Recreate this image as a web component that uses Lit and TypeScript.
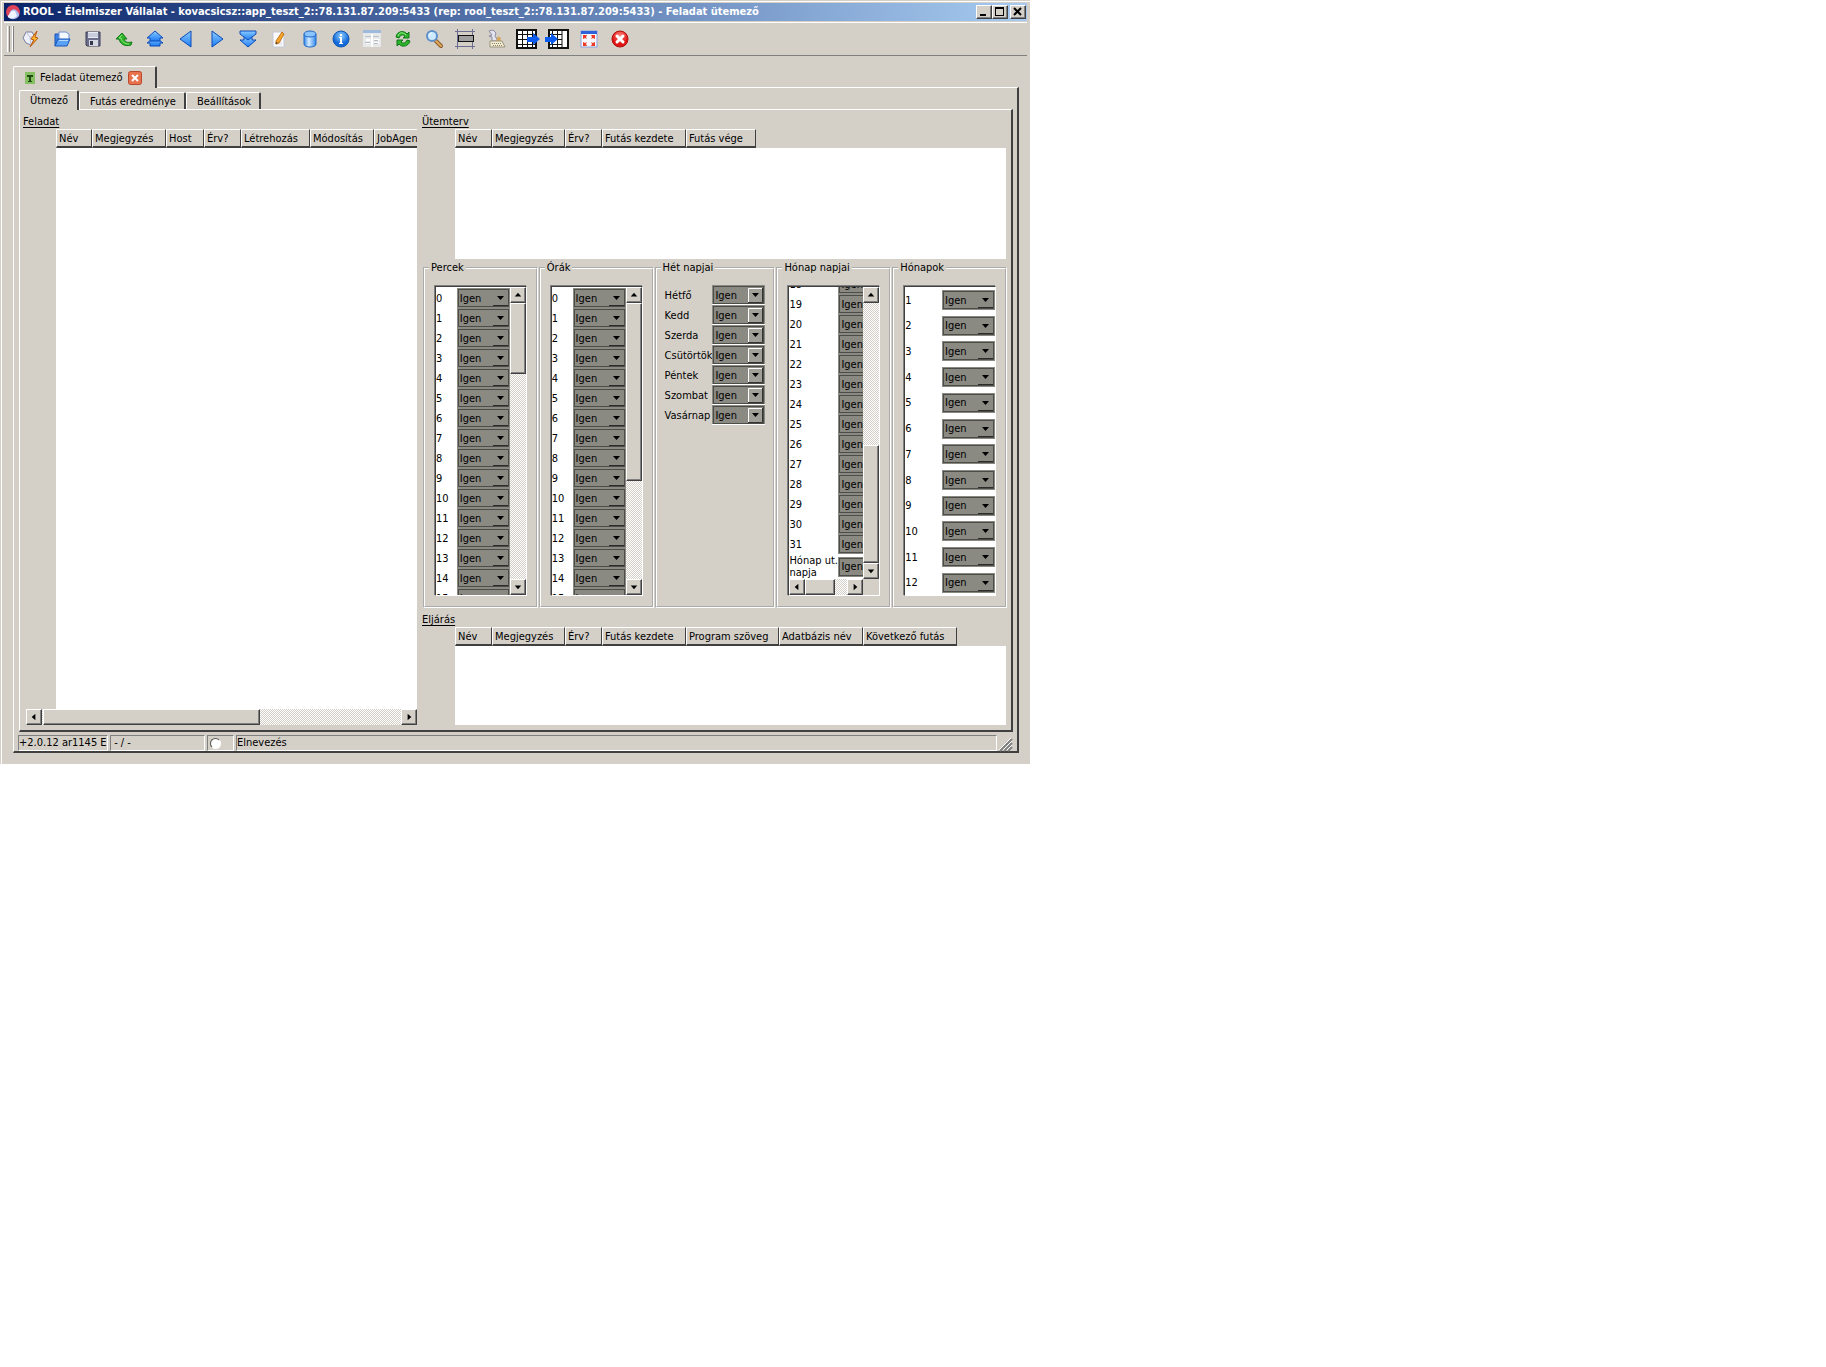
import { LitElement, html, css, svg } from "lit";
import { customElement, state } from "lit/decorators.js";

type Column = { title: string; width: number };

const col = (title: string, width: number): Column => ({ title, width });

const TASK_COLUMNS = [
  col("Név", 36), col("Megjegyzés", 74), col("Host", 38), col("Érv?", 37),
  col("Létrehozás", 69), col("Módosítás", 64), col("JobAgent", 60),
];
const PLAN_COLUMNS = [
  col("Név", 37), col("Megjegyzés", 73), col("Érv?", 37), col("Futás kezdete", 84), col("Futás vége", 70),
];
const PROC_COLUMNS = [
  col("Név", 37), col("Megjegyzés", 73), col("Érv?", 37), col("Futás kezdete", 84),
  col("Program szöveg", 93), col("Adatbázis név", 84), col("Következő futás", 94),
];
const DAYS = ["Hétfő", "Kedd", "Szerda", "Csütörtök", "Péntek", "Szombat", "Vasárnap"];
const range = (from: number, to: number) => Array.from({ length: to - from + 1 }, (_, i) => String(from + i));

const ICONS: { name: string; art: unknown }[] = [
  { name: "Új kapcsolat", art: svg`
    <path d="M5 3 L11 3 L14 8 L10 16 L5 14 L2 9 Z" fill="#eceff8" stroke="#7b7f9c"/>
    <path d="M5 3 L9 8 L10 16 M9 8 L14 8" fill="none" stroke="#b9bdd4"/>
    <path d="M16 2 L10 10 L13 11 L9 18 L17 9 L14 8 Z" fill="#ffb52e" stroke="#c05a10"/>` },
  { name: "Megnyitás", art: svg`
    <path d="M3 17 V5 H8 L10 7 H15 V9" fill="#3b80e6" stroke="#1c55b8"/>
    <path d="M7 3 H14 L17 5 V12 H7 Z" fill="#f4f8ff" stroke="#6c90d4"/>
    <path d="M3 17 L6 10 H18 L15 17 Z" fill="#5aa2f8" stroke="#1c55b8"/>
    <path d="M7 11.500 H16" stroke="#b8dcff"/>` },
  { name: "Mentés", art: svg`
    <path d="M3 3 H17 V17 H4 L3 16 Z" fill="#6c6f8c" stroke="#3c3f58"/>
    <rect x="5" y="3" width="10" height="6" fill="#e8ebf4"/><path d="M5 5 H15 M5 7 H15" stroke="#a7acc4"/>
    <rect x="6" y="11" width="9" height="6" fill="#d6d8e2"/><rect x="7" y="12" width="3" height="4" fill="#34374e"/>` },
  { name: "Visszavonás", art: svg`
    <path d="M8 4 L2 10 H5 C6 15 11 18 17 16 L18 13 C13 14 11 13 10 10 H13 Z" fill="#2fb52b" stroke="#127a16"/>
    <path d="M8 6 L5 9 H7 C8 13 11 15 15 15" fill="none" stroke="#8be77c"/>` },
  { name: "Első", art: svg`
    <path d="M10 8 L18 14 H15 V17 H5 V14 H2 Z" fill="url(#blue)" stroke="#0b4bb8"/>
    <path d="M10 2 L18 9 H15 V12 H5 V9 H2 Z" fill="url(#blue)" stroke="#0b4bb8"/>` },
  { name: "Előző", art: svg`<path d="M15 2 V18 L4 10 Z" fill="url(#blue)" stroke="#0b4bb8" stroke-linejoin="round"/>` },
  { name: "Következő", art: svg`<path d="M5 2 V18 L16 10 Z" fill="url(#blue)" stroke="#0b4bb8" stroke-linejoin="round"/>` },
  { name: "Utolsó", art: svg`
    <path d="M10 18 L18 11 H14 V8 H6 V11 H2 Z" fill="url(#blue)" stroke="#0b4bb8"/>
    <path d="M10 11 L18 5 V2 H2 V5 Z" fill="url(#blue)" stroke="#0b4bb8"/>` },
  { name: "Szerkesztés", art: svg`
    <rect x="4" y="3" width="11" height="15" fill="#fbfbfd" stroke="#c3c6d2"/>
    <path d="M6 13 H13 M6 15 H13" stroke="#d5d8e4"/>
    <path d="M13 3 L15 5 L10 14 L7 15 L7 12 Z" fill="#f5a52a" stroke="#c2731a"/><path d="M7 15 L8 13" stroke="#333"/>` },
  { name: "Adatbázis", art: svg`
    <path d="M4 5 V15 C4 19 16 19 16 15 V5 Z" fill="url(#tank)" stroke="#1f69c8"/>
    <ellipse cx="10" cy="5" rx="6" ry="3" fill="#8cc4fb" stroke="#1f69c8"/>` },
  { name: "Információ", art: svg`
    <circle cx="10" cy="10" r="8" fill="url(#ball)" stroke="#0f58b4"/>
    <rect x="9" y="5" width="2" height="2" fill="#fff"/><path d="M8 8 H11 V14 H12 V15 H8 V14 H9 V9 H8 Z" fill="#fff"/>` },
  { name: "Űrlap", art: svg`
    <rect x="1" y="2" width="18" height="16" fill="#e6e8ea"/><rect x="1" y="1" width="18" height="3" fill="#9db9dc"/>
    <path d="M3 7.500 H9 M11 7.500 H17" stroke="#b9c0c8"/><path d="M10 5 V18 M4 11 H8 M12 11 H17 M4 14 H8 M12 14 H17" stroke="#fff" stroke-width="2"/>
    <path d="M12 11.500 H16 M12 14.500 H16 M3 13.500 H8" stroke="#b4bac0"/>` },
  { name: "Frissítés", art: svg`
    <path d="M3 8 C4 2 11 1 14 5 L16 3 V9 H10 L12 7 C10 5 7 6 6 9 Z" fill="#2db52c" stroke="#0f7416"/>
    <path d="M17 12 C16 17 9 19 6 15 L4 17 V11 H10 L8 13 C10 15 13 14 14 11 Z" fill="#2db52c" stroke="#0f7416"/>
    <path d="M5 7 C6 3 10 3 13 6" fill="none" stroke="#9cf08c"/>` },
  { name: "Keresés", art: svg`
    <path d="M12 12 L17 17" stroke="#8a5a2a" stroke-width="4" stroke-linecap="round"/>
    <path d="M12 12 L17 17" stroke="#e0a95a" stroke-width="2" stroke-linecap="round"/>
    <circle cx="8" cy="7" r="5" fill="#cdeafd" stroke="#5e8fc9" stroke-width="2"/><path d="M5 7 C5 5 7 4 8 4" fill="none" stroke="#fff"/>` },
  { name: "Kijelölés", art: svg`
    <path d="M0 2.500 H20 M0 17.500 H20 M2.500 0 V20 M17.500 0 V20" stroke="#6c6f92"/>
    <rect x="3.500" y="6.500" width="15" height="6" fill="#a0a0a0" stroke="#111"/>` },
  { name: "Billentyűzet", art: svg`
    <path d="M3 2 L7 1 L10 4 L9 7 L12 12 H6 L6 8 L3 7 L6 6 Z" fill="#e4e4ee" stroke="#8c8ca4"/>
    <path d="M12 7 L15 9 L14 12 H10 Z" fill="#d7a85c"/>
    <path d="M4 12 H16 L19 18 H4 Z" fill="#f3ecd2" stroke="#98917a"/><path d="M6 14.500 H16 M7 16.500 H17" stroke="#8a846c" stroke-dasharray="1 1"/>` },
  { name: "Oszlop ki", art: svg`
    <rect x="0" y="1" width="19" height="18" fill="#fff" stroke="#111" stroke-width="2"/><path d="M0 5.500 H19 M0 10.500 H19 M0 15.500 H19 M5.500 1 V19 M10.500 1 V19 M15.500 1 V19" fill="none" stroke="#111"/>
    <path d="M10 8 H16 V4 L23 10 L16 16 V13 H10 Z" fill="#0a5bf0"/>` },
  { name: "Oszlop be", art: svg`
    <rect x="1" y="1" width="19" height="18" fill="#fff" stroke="#111" stroke-width="2"/><path d="M0 5.500 H14 M0 10.500 H14 M0 15.500 H14 M4.500 1 V19 M9.500 1 V19 M14 1 V19" fill="none" stroke="#111"/>
    <path d="M-3 8 H3 V4 L10 10 L3 16 V13 H-3 Z" fill="#0a5bf0"/>` },
  { name: "Teljes képernyő", art: svg`
    <rect x="2" y="2" width="16" height="16" fill="#f4f6fc" stroke="#8aa2dc"/><rect x="2" y="2" width="16" height="3" fill="#2f62d8"/>
    <path d="M4 6 H8 L7 8 L8 10 L6 9 L4 10 Z M16 6 H12 L13 8 L12 10 L14 9 L16 10 Z M4 17 H8 L7 15 L8 13 L6 14 L4 13 Z M16 17 H12 L13 15 L12 13 L14 14 L16 13 Z" fill="#ee3a24"/>` },
  { name: "Bezárás", art: svg`
    <circle cx="10" cy="10" r="8" fill="url(#red)" stroke="#b00c0c"/>
    <path d="M7 7 L13 13 M13 7 L7 13" stroke="#fff" stroke-width="3" stroke-linecap="round"/>` },
];

const ARROWS: Record<string, string> = {
  up: "M4 9 H11 L7.500 5 Z",
  down: "M4 6 H11 L7.500 10 Z",
  left: "M9 4 V11 L5 7.500 Z",
  right: "M6 4 V11 L10 7.500 Z",
};

@customElement("app-root")
export class AppRoot extends LitElement {
  @state() private tab = 0;

  static styles = css`
    :host {
      --face: #d4d0c8;
      --shade: #808080;
      --dark: #404040;
      display: grid;
      grid-template-columns: minmax(0, 515fr) minmax(0, 398fr);
      align-items: start;
      font: 11px/14px "DejaVu Sans Condensed", "Noto Sans", sans-serif;
      color: #000;
    }
    * { box-sizing: border-box; }
    button, select, input { font: inherit; color: inherit; margin: 0; padding: 0; border-radius: 0; }
    svg { display: block; overflow: visible; }
    .window {
      background: var(--face);
      padding: 3px 3px 11px 4px;
      box-shadow: inset 1px 1px var(--face), inset 2px 2px #fff;
    }
    .titlebar {
      display: flex;
      align-items: center;
      height: 18px;
      padding: 0 1px 0 2px;
      gap: 3px;
      background: linear-gradient(90deg, #0a246a, #a6caf0);
      color: #fff;
    }
    .titlebar h1 { flex: 1; margin: 0; font-size: 11px; font-weight: bold; white-space: nowrap; overflow: hidden; }
    .winbtns { display: flex; }
    .raised {
      background: var(--face);
      border: 1px solid;
      border-color: #fff var(--dark) var(--dark) #fff;
      box-shadow: inset -1px -1px var(--shade);
    }
    .winbtn { width: 16px; height: 14px; }
    .winbtn:last-child { margin-left: 2px; }
    .toolbar {
      display: flex;
      align-items: center;
      height: 34px;
      margin-top: 1px;
      border-top: 1px solid #fff;
      border-bottom: 1px solid var(--shade);
    }
    .grip { width: 6px; height: 26px; margin: 0 2px 0 3px; border: solid #fff; border-width: 0 1px; box-shadow: 1px 0 var(--shade), inset -2px 0 var(--face), inset -3px 0 var(--shade); }
    .tool { flex: 0 0 31px; height: 26px; display: grid; place-items: center; background: none; border: 0; }
    .main { padding: 10px 8px 0 9px; }
    .tabs { display: flex; align-items: flex-end; }
    .tab {
      display: flex;
      align-items: center;
      background: none;
      border: solid;
      border-width: 1px 2px 0 1px;
      border-color: #fff var(--dark) #fff #fff;
      border-radius: 2px 2px 0 0;
      white-space: nowrap;
      height: 17px;
      padding: 2px 8px 0 10px;
    }
    .tab.on { height: 20px; margin-bottom: -1px; padding: 0 9px 0 10px; background: var(--face); position: relative; }
    .tab.doc { height: 22px; padding: 0 13px 0 11px; gap: 5px; }
    .closer { background: none; border: 0; }
    .panel { border: solid; border-width: 1px 2px 2px 1px; border-color: #fff var(--dark) var(--dark) #fff; }
    .outer { padding: 2px 4px 0 5px; }
    .inner {
      display: grid;
      grid-template-columns: minmax(0, 394fr) minmax(0, 584fr);
      column-gap: 5px;
      padding: 0 5px 5px 3px;
    }
    .side { display: flex; flex-direction: column; min-width: 0; }
    .side > .bar { margin-left: 3px; }
    .caption { margin: 0; padding-top: 5px; height: 19px; font-weight: normal; font-size: 11px; text-decoration: underline; text-underline-offset: 2px; }
    .grid { display: flex; flex-direction: column; margin-left: 33px; overflow: hidden; }
    .side > .grid.tall { flex: 1; }
    .grid table { table-layout: fixed; border-collapse: separate; border-spacing: 0; width: 0; height: 19px; }
    .grid th {
      font-weight: normal;
      text-align: left;
      padding: 2px 2px 0;
      height: 19px;
      border: solid;
      border-width: 1px 1px 2px 1px;
      border-color: #fff var(--dark) var(--dark) #fff;
      white-space: nowrap;
      overflow: hidden;
    }
    .sheet { flex: 1; background: #fff; }
    .plan .sheet { min-height: 111px; }
    .proc .sheet { min-height: 79px; }
    .groups {
      display: grid;
      grid-template-columns: 115fr 115fr 121fr 115fr 115fr;
      column-gap: 1px;
      margin: 2px -1px 0 1px;
    }
    fieldset { min-width: 0; margin: 0; padding: 11px 9px 10px 10px; border: 2px groove #fff; }
    legend { padding: 0 2px; margin-left: -6px; }
    fieldset.days { padding: 10px 8px; }
    .days legend { margin-left: -4px; }
    .list {
      display: grid;
      grid-template-columns: minmax(0, 1fr) auto;
      grid-template-rows: minmax(0, 1fr) auto;
      height: 310px;
      border: 1px solid;
      border-color: var(--dark) #fff #fff var(--dark);
      box-shadow: -1px -1px var(--shade);
      background: #fff;
    }
    .rows { display: flex; flex-direction: column; overflow: hidden; min-width: 0; padding-top: 1px; }
    .rows.end { justify-content: flex-end; padding-top: 0; }
    .rows.spread { justify-content: space-between; padding: 3px 0 2px; }
    .row { display: flex; align-items: center; flex: none; min-height: 20px; }
    .row > span:first-child { flex: 1; min-width: 0; padding-top: 1px; line-height: 12px; }
    .end .row > span:first-child { flex: 0 0 49px; }
    .combo { position: relative; flex: 0 0 53px; height: 20px; padding: 1px; background: #8a8982; }
    .combo select {
      display: block;
      width: 100%;
      height: 18px;
      padding: 1px 0 0 1px;
      appearance: none;
      background: transparent;
      border: 1px solid #4c4c48;
    }
    .combo svg { position: absolute; right: 1px; top: 1px; pointer-events: none; }
    .days .combo { border-bottom: 1px solid #fff; }
    .days .row > span:first-child { white-space: nowrap; }
    .bar { display: flex; width: 16px; flex-direction: column; background: repeating-conic-gradient(#fff 0 25%, var(--face) 0 50%) 0 0 / 2px 2px; }
    .bar.h { width: auto; height: 16px; flex-direction: row; }
    .bar button { flex: 0 0 16px; height: 16px; }
    .corner { background: var(--face); }
    .status { display: flex; align-items: center; gap: 2px; height: 16px; margin: 3px 16px 0 -1px; }
    .cell { height: 16px; border: 1px solid; border-color: var(--shade) #fff #fff var(--shade); white-space: nowrap; overflow: hidden; display: flex; align-items: center; }
    .foot { position: relative; }
    .sizer { position: absolute; right: 1px; bottom: 0; }
    .radio { appearance: none; width: 11px; height: 11px; margin-left: 2px; border: 1px solid; border-color: #505050 #fff #fff #505050; border-radius: 50%; background: #fff; }
  `;

  private combo() {
    return html`<span class="combo">
      <select><option>Igen</option><option>Nem</option></select>
      <svg width="17" height="18"><path d="M1 16.500 H16" stroke="#2c2c2a"/><path d="M5 7 H12 L8.500 11 Z"/></svg>
    </span>`;
  }

  private dayCombo() {
    return html`<span class="combo">
      <select><option>Igen</option><option>Nem</option></select>
      <svg width="17" height="18"><rect x="1" y="2" width="15" height="15" fill="#a09f98"/><path d="M1.500 16 V2.500 H15" stroke="#fff" fill="none"/><path d="M1 16.500 H15.500 V2" stroke="#333" fill="none"/><path d="M5 7 H12 L8.500 11 Z"/></svg>
    </span>`;
  }

  private row(label: string, day = false) {
    return html`<label class="row"><span>${label}</span>${day ? this.dayCombo() : this.combo()}</label>`;
  }

  private arrow(dir: string, name: string) {
    return html`<button class="raised" aria-label=${name}>
      <svg width="14" height="14" viewBox="0 0 15 15"><path d=${ARROWS[dir]}/></svg>
    </button>`;
  }

  /* before, thumb and after are the shares of the track. */
  private bar(horizontal: boolean, before: number, thumb: number, after: number) {
    return html`<div class="bar ${horizontal ? "h" : ""}">
      ${this.arrow(horizontal ? "left" : "up", "Vissza")}
      <div style="flex:${before} 0 0px"></div>
      <div class="raised" style="flex:${thumb} 0 0px"></div>
      <div style="flex:${after} 0 0px"></div>
      ${this.arrow(horizontal ? "right" : "down", "Előre")}
    </div>`;
  }

  private grid(kind: string, columns: Column[]) {
    return html`<div class="grid ${kind}">
      <table><thead><tr>${columns.map((c) => html`<th style="width:${c.width}px">${c.title}</th>`)}</tr></thead></table>
      <div class="sheet"></div>
    </div>`;
  }

  render() {
    return html`
      <div class="window">
        <header class="titlebar">
          <svg width="14" height="16" viewBox="0 0 14 16"><circle cx="7" cy="8" r="7" fill="#e0435a"/><path d="M2 13 L4 8 A4 4 0 0 1 10 6 L12 8 A4 4 0 0 1 13 12 A7 7 0 0 1 2 13 Z" fill="#aebcf0"/><path d="M2 12 L4 9 A4 4 0 0 1 9 7 L11 12 A7 7 0 0 1 2 13 Z" fill="#f2f4ff"/></svg>
          <h1>ROOL - Élelmiszer Vállalat - kovacsicsz::app_teszt_2::78.131.87.209:5433 (rep: rool_teszt_2::78.131.87.209:5433) - Feladat ütemező</h1>
          <div class="winbtns">
            <button class="raised winbtn" aria-label="Kis méret"><svg width="14" height="12"><path d="M3 8 H9 V10 H3 Z"/></svg></button>
            <button class="raised winbtn" aria-label="Teljes méret"><svg width="14" height="12"><path d="M2 1 H11 V10 H2 Z M3 3 V9 H10 V3 Z" fill-rule="evenodd"/></svg></button>
            <button class="raised winbtn" aria-label="Bezárás"><svg width="14" height="12"><path d="M3 2 L10 9 M10 2 L3 9" stroke="#000" stroke-width="2"/></svg></button>
          </div>
        </header>
        <div class="toolbar">
          <div class="grip"></div>
          <svg width="0" height="0">
            <defs>
              <linearGradient id="blue" x2="0" y2="1"><stop stop-color="#8ccbff"/><stop offset="1" stop-color="#1c7cf4"/></linearGradient>
              <linearGradient id="tank"><stop stop-color="#2f86ea"/><stop offset=".4" stop-color="#d6ecff"/><stop offset="1" stop-color="#2f86ea"/></linearGradient>
              <radialGradient id="ball" cy=".3"><stop stop-color="#8ed0ff"/><stop offset="1" stop-color="#1468d8"/></radialGradient>
              <radialGradient id="red" cy=".3"><stop stop-color="#ff8a80"/><stop offset="1" stop-color="#e01414"/></radialGradient>
            </defs>
          </svg>
          ${ICONS.map((i) => html`<button class="tool" aria-label=${i.name}><svg width="20" height="20" viewBox="0 0 20 20">${i.art}</svg></button>`)}
        </div>
        <div class="main">
          <div class="tabs">
            <div class="tab doc on">
              <svg width="10" height="12"><rect width="10" height="12" fill="#86bf62"/><path d="M2 3 H8 V5 H6 V9 H7 V10 H3 V9 H4 V5 H2 Z" fill="#1f4a14"/></svg>
              <span>Feladat ütemező</span>
              <button class="closer" aria-label="Lap bezárása"><svg width="14" height="14"><rect x=".5" y=".5" width="13" height="13" rx="2" fill="#e8724e" stroke="#b8482c"/><path d="M4 4 L10 10 M10 4 L4 10" stroke="#fff" stroke-width="2"/></svg></button>
            </div>
          </div>
          <div class="panel outer">
            <div class="tabs" role="tablist">
              ${["Ütmező", "Futás eredménye", "Beállítások"].map((t, i) => html`<button role="tab" class="tab ${this.tab === i ? "on" : ""}" @click=${() => (this.tab = i)}>${t}</button>`)}
            </div>
            <div class="panel inner">
              <section class="side">
                <h2 class="caption">Feladat</h2>
                ${this.grid("tall", TASK_COLUMNS)}
                ${this.bar(true, 1, 217, 142)}
              </section>
              <section class="side">
                <h2 class="caption">Ütemterv</h2>
                ${this.grid("plan", PLAN_COLUMNS)}
                <div class="groups">
                  <fieldset><legend>Percek</legend>
                    <div class="list"><div class="rows">${range(0, 15).map((n) => this.row(n))}</div>${this.bar(false, 0, 69, 207)}</div>
                  </fieldset>
                  <fieldset><legend>Órák</legend>
                    <div class="list"><div class="rows">${range(0, 15).map((n) => this.row(n))}</div>${this.bar(false, 0, 177, 99)}</div>
                  </fieldset>
                  <fieldset class="days"><legend>Hét napjai</legend>${DAYS.map((d) => this.row(d, true))}</fieldset>
                  <fieldset><legend>Hónap napjai</legend>
                    <div class="list">
                      <div class="rows end">${range(18, 31).map((n) => this.row(n))}${this.row("Hónap ut. napja")}</div>
                      ${this.bar(false, 143, 116, 0)}
                      ${this.bar(true, 0, 29, 13)}
                      <div class="corner"></div>
                    </div>
                  </fieldset>
                  <fieldset><legend>Hónapok</legend>
                    <div class="list"><div class="rows spread">${range(1, 12).map((n) => this.row(n))}</div></div>
                  </fieldset>
                </div>
                <h2 class="caption">Eljárás</h2>
                ${this.grid("proc", PROC_COLUMNS)}
              </section>
            </div>
            <footer class="foot">
              <div class="status">
                <span class="cell" style="flex:0 0 90px">+2.0.12 ar1145 E</span>
                <span class="cell" style="flex:0 0 95px">&nbsp;- / -</span>
                <span class="cell" style="flex:0 0 27px"><input class="radio" type="radio" aria-label="Állapot" /></span>
                <span class="cell" style="flex:1">Elnevezés</span>
              </div>
              <svg class="sizer" width="12" height="12"><path d="M0 12 L12 0 M4 12 L12 4 M8 12 L12 8" stroke="#808080" stroke-width="2"/><path d="M-1 11 L11 -1 M3 11 L12 2 M7 11 L12 6" stroke="#fff"/></svg>
            </footer>
          </div>
        </div>
      </div>
    `;
  }
}
